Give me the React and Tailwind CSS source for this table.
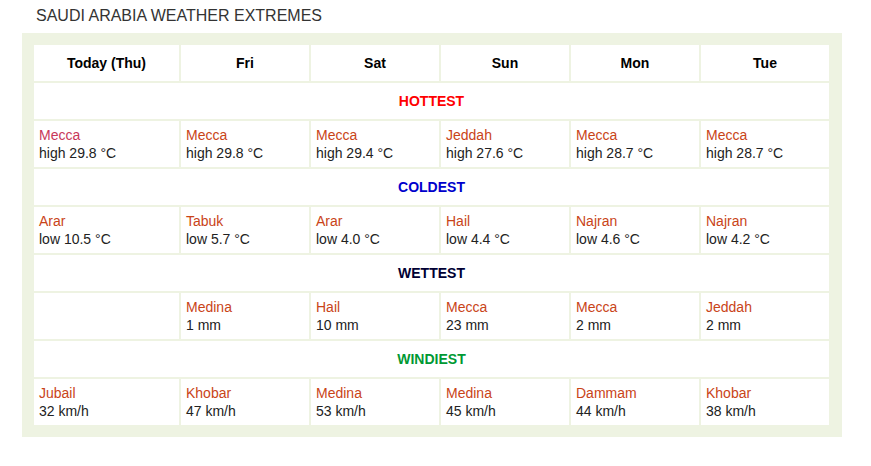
const days = ['Today (Thu)', 'Fri', 'Sat', 'Sun', 'Mon', 'Tue'];

const sections = [
  {
    title: 'HOTTEST',
    color: 'text-[#ff0000]',
    cells: [
      ['Mecca', 'high 29.8 °C'],
      ['Mecca', 'high 29.8 °C'],
      ['Mecca', 'high 29.4 °C'],
      ['Jeddah', 'high 27.6 °C'],
      ['Mecca', 'high 28.7 °C'],
      ['Mecca', 'high 28.7 °C'],
    ],
  },
  {
    title: 'COLDEST',
    color: 'text-[#0000cc]',
    cells: [
      ['Arar', 'low 10.5 °C'],
      ['Tabuk', 'low 5.7 °C'],
      ['Arar', 'low 4.0 °C'],
      ['Hail', 'low 4.4 °C'],
      ['Najran', 'low 4.6 °C'],
      ['Najran', 'low 4.2 °C'],
    ],
  },
  {
    title: 'WETTEST',
    color: 'text-[#000033]',
    cells: [
      null,
      ['Medina', '1 mm'],
      ['Hail', '10 mm'],
      ['Mecca', '23 mm'],
      ['Mecca', '2 mm'],
      ['Jeddah', '2 mm'],
    ],
  },
  {
    title: 'WINDIEST',
    color: 'text-[#009933]',
    cells: [
      ['Jubail', '32 km/h'],
      ['Khobar', '47 km/h'],
      ['Medina', '53 km/h'],
      ['Medina', '45 km/h'],
      ['Dammam', '44 km/h'],
      ['Khobar', '38 km/h'],
    ],
  },
];

const App = () => {
  return (
    <div className="w-[871px] h-[466px] bg-white font-['Liberation_Sans',Arial,sans-serif] text-[14px]">
      {/* Title */}
      <div className="h-[33px] pl-[36px] pt-[6px] text-[16px] leading-[20px] text-[#333333]">
        SAUDI ARABIA WEATHER EXTREMES
      </div>

      <div className="ml-[22px] w-[820px] bg-[#eef3e2] p-[12px]">
        <div className="grid grid-cols-[145px_repeat(5,128px)] gap-[2px]">
          {/* Day headers */}
          {days.map((d) => (
            <div
              key={d}
              className="h-[36px] bg-white flex items-center justify-center font-bold text-black"
            >
              {d}
            </div>
          ))}

          {sections.map((s) => (
            <div key={s.title} className="contents">
              <div
                className={`col-span-6 h-[36px] bg-white flex items-center justify-center font-bold ${s.color}`}
              >
                {s.title}
              </div>
              {s.cells.map((c, i) => (
                <div key={i} className="h-[46px] bg-white px-[5px] pt-[5px] leading-[18px]">
                  {c && (
                    <>
                      <div
                        className={
                          s.title === 'HOTTEST' && i === 0
                            ? 'text-[#c8385a]'
                            : 'text-[#c94418]'
                        }
                      >
                        {c[0]}
                      </div>
                      <div className="text-[#222222]">{c[1]}</div>
                    </>
                  )}
                </div>
              ))}
            </div>
          ))}
        </div>
      </div>
    </div>
  );
};

export default App;
